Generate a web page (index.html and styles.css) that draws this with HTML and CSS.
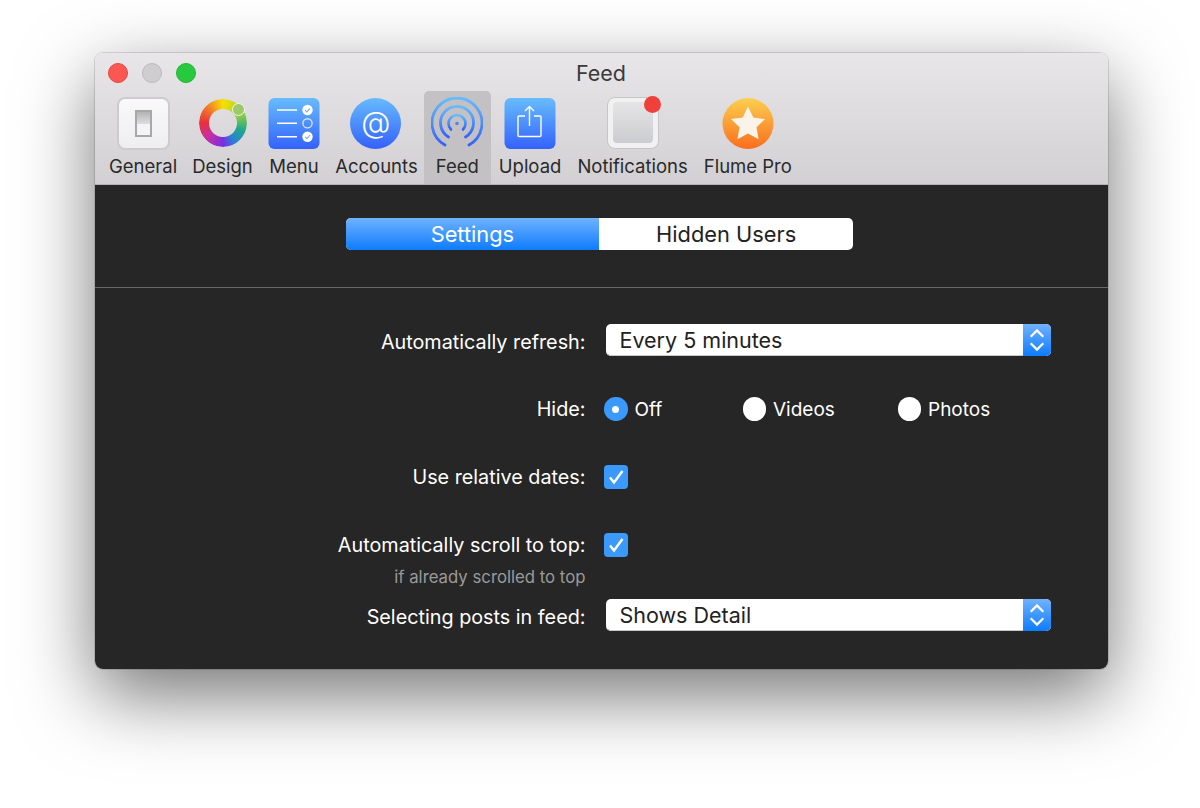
FILE: index.html
```html
<!DOCTYPE html>
<html lang="en">
<head>
    <meta charset="UTF-8">
    <title>Feed</title>
    <link rel="stylesheet" href="styles.css">
</head>
<body>
    <div class="window">
        <div class="titlebar">
            <div class="lights">
                <span class="light red"></span>
                <span class="light gray"></span>
                <span class="light green"></span>
            </div>
            <div class="title">Feed</div>
            <div class="tabs">
                <div class="tab tab-general">
                    <div class="icon">
                        <div class="general-icon"><div class="switch"><div class="switch-top"></div><div class="switch-bottom"></div></div></div>
                    </div>
                    <div class="tab-label">General</div>
                </div>
                <div class="tab tab-design">
                    <div class="icon">
                        <div class="wheel"></div>
                        <div class="wheel-knob"></div>
                    </div>
                    <div class="tab-label">Design</div>
                </div>
                <div class="tab tab-menu">
                    <div class="icon">
                        <svg width="52" height="52" viewBox="0 0 52 52">
                            <defs>
                                <linearGradient id="blue" x1="0" y1="0" x2="0" y2="1">
                                    <stop offset="0" stop-color="#67bcfd"/>
                                    <stop offset="1" stop-color="#3362fb"/>
                                </linearGradient>
                            </defs>
                            <rect x="0.5" y="1" width="51" height="51" rx="6" fill="url(#blue)"/>
                            <g stroke="#fff" stroke-width="1.4">
                                <path d="M9 13h20M9 26.300h20M9 39.700h20"/>
                                <circle cx="39.500" cy="26.300" r="4.600" fill="none" stroke="#d5e4fd"/>
                            </g>
                            <circle cx="39.500" cy="13" r="5.200" fill="#fff"/>
                            <circle cx="39.500" cy="39.700" r="5.200" fill="#fff"/>
                            <path d="M37.100 13.200l1.700 1.700 3.200-3.400M37.100 39.900l1.700 1.700 3.200-3.400" fill="none" stroke="#7fb0f8" stroke-width="1.200"/>
                        </svg>
                    </div>
                    <div class="tab-label">Menu</div>
                </div>
                <div class="tab tab-accounts">
                    <div class="icon">
                        <div class="at-icon">@</div>
                    </div>
                    <div class="tab-label">Accounts</div>
                </div>
                <div class="tab tab-feed active">
                    <div class="icon">
                        <svg width="52" height="52" viewBox="0 0 52 52" fill="none" stroke="url(#blue)" stroke-linecap="round">
                            <path d="M14 48A25 25 0 1 1 38 48" stroke-width="2.800"/>
                            <path d="M17.500 40A16.500 16.500 0 1 1 34.500 40" stroke-width="2.800"/>
                            <path d="M20 32.500A8.500 8.500 0 1 1 32 32.500" stroke-width="2.600"/>
                            <circle cx="26" cy="26.500" r="1.800" fill="#4a86f8" stroke="none"/>
                        </svg>
                    </div>
                    <div class="tab-label">Feed</div>
                </div>
                <div class="tab tab-upload">
                    <div class="icon">
                        <svg width="52" height="52" viewBox="0 0 52 52" fill="none">
                            <rect x="0.5" y="1" width="51" height="51" rx="6" fill="url(#blue)"/>
                            <g stroke="#fff" stroke-width="1.400" stroke-linejoin="round">
                                <path d="M21 19h-6a1 1 0 0 0 -1 1v18.500a1 1 0 0 0 1 1h21a1 1 0 0 0 1 -1v-18.500a1 1 0 0 0 -1 -1h-6"/>
                                <path d="M25.500 29V10M21 14l4.500-4.500 4.500 4.500"/>
                            </g>
                        </svg>
                    </div>
                    <div class="tab-label">Upload</div>
                </div>
                <div class="tab tab-notifications">
                    <div class="icon">
                        <div class="notif-icon"><div class="notif-inner"></div></div>
                        <div class="notif-badge"></div>
                    </div>
                    <div class="tab-label">Notifications</div>
                </div>
                <div class="tab tab-pro">
                    <div class="icon">
                        <svg width="52" height="52" viewBox="0 0 52 52">
                            <defs>
                                <linearGradient id="orange" x1="0" y1="0" x2="0" y2="1">
                                    <stop offset="0" stop-color="#fbd04f"/>
                                    <stop offset="1" stop-color="#fa6d1d"/>
                                </linearGradient>
                            </defs>
                            <circle cx="26" cy="26.500" r="25.500" fill="url(#orange)"/>
                            <path d="M26 9.500l5.300 11 11.700 1.600-8.500 8.200 2.100 12-10.600-5.700-10.600 5.700 2.100-12-8.500-8.200 11.700-1.600z" fill="#f9f3ea"/>
                        </svg>
                    </div>
                    <div class="tab-label">Flume Pro</div>
                </div>
            </div>
        </div>

        <div class="panel">
            <div class="segment-row">
                <div class="segment">
                    <div class="segment-item selected">Settings</div>
                    <div class="segment-item">Hidden Users</div>
                </div>
            </div>

            <div class="form">
                <div class="form-row row-refresh">
                    <div class="form-label select-label">Automatically refresh:</div>
                    <div class="select">
                        <span class="select-value">Every 5 minutes</span>
                        <span class="stepper">
                            <svg width="16" height="24" viewBox="0 0 16 24" fill="none" stroke="#fff" stroke-width="2.200">
                                <path d="M1.700 8.700l6.300-6.300 6.300 6.300M1.700 15.300l6.300 6.300 6.300-6.300"/>
                            </svg>
                        </span>
                    </div>
                </div>

                <div class="form-row row-hide">
                    <div class="form-label">Hide:</div>
                    <div class="radios">
                        <div class="radio-item radio-off"><span class="radio on"></span>Off</div>
                        <div class="radio-item radio-videos"><span class="radio"></span>Videos</div>
                        <div class="radio-item"><span class="radio"></span>Photos</div>
                    </div>
                </div>

                <div class="form-row row-dates">
                    <div class="form-label">Use relative dates:</div>
                    <span class="checkbox">
                        <svg width="24" height="24" viewBox="0 0 24 24" fill="none" stroke="#fff" stroke-width="2.400"><path d="M6 12.500l4 5 8.500-11.500"/></svg>
                    </span>
                </div>

                <div class="form-row row-scroll">
                    <div class="form-label">Automatically scroll to top:</div>
                    <span class="checkbox">
                        <svg width="24" height="24" viewBox="0 0 24 24" fill="none" stroke="#fff" stroke-width="2.400"><path d="M6 12.500l4 5 8.500-11.500"/></svg>
                    </span>
                </div>
                <div class="form-row row-note">
                    <div class="form-label note">if already scrolled to top</div>
                </div>

                <div class="form-row row-select">
                    <div class="form-label select-label">Selecting posts in feed:</div>
                    <div class="select">
                        <span class="select-value">Shows Detail</span>
                        <span class="stepper">
                            <svg width="16" height="24" viewBox="0 0 16 24" fill="none" stroke="#fff" stroke-width="2.200">
                                <path d="M1.700 8.700l6.300-6.300 6.300 6.300M1.700 15.300l6.300 6.300 6.300-6.300"/>
                            </svg>
                        </span>
                    </div>
                </div>
            </div>
        </div>
    </div>
</body>
</html>
```

FILE: styles.css
```css
html, body {
    height: 100%;
}
body {
    margin: 0;
    background: #fff;
    font-family: Inter, "Liberation Sans", sans-serif;
    overflow: hidden;
}
.window {
    width: 1013px;
    height: 616px;
    margin: 53px 0 0 94.5px;
    border-radius: 8px;
    box-shadow: 0 26px 75px rgba(0, 0, 0, 0.55), 0 0 0 1px rgba(0, 0, 0, 0.12);
    display: flex;
    flex-direction: column;
}

/* toolbar */
.titlebar {
    height: 132px;
    box-sizing: border-box;
    background: linear-gradient(#e8e6e8, #d2d0d2);
    border-radius: 8px 8px 0 0;
    border-bottom: 1px solid #b4b2b4;
    position: relative;
}
.lights {
    position: absolute;
    top: 10px;
    left: 13.5px;
    display: flex;
    gap: 14px;
}
.light {
    width: 20px;
    height: 20px;
    border-radius: 50%;
    box-sizing: border-box;
}
.red {
    background: #fc5753;
    border: 1px solid #e5453f;
}
.gray {
    background: #cfcdcf;
    border: 1px solid #bcbabc;
}
.green {
    background: #28c93f;
    border: 1px solid #20b534;
}
.title {
    height: 38px;
    line-height: 41px;
    text-align: center;
    font-size: 21.5px;
    color: #3a3a3a;
}
.tabs {
    display: flex;
    padding-left: 6.5px;
}
.tab {
    height: 93px;
    padding: 6px 8px 0;
    box-sizing: border-box;
    display: flex;
    flex-direction: column;
    align-items: center;
}
.tab.active {
    background: #c3c1c3;
    border-radius: 5px 5px 0 0;
    padding: 6px 12px 0;
}
.tab-design {
    margin-left: -1px;
}
.tab-menu {
    margin-left: 0.5px;
}
.tab-accounts {
    margin-left: 0.5px;
}
.tab-feed {
    margin-left: -2px;
}
.icon {
    width: 52px;
    height: 57px;
    margin: 0 -12px;
    position: relative;
}
.icon svg {
    display: block;
}
.tab-label {
    font-size: 18.5px;
    line-height: 24px;
    color: #2a2a2a;
    white-space: nowrap;
}

.general-icon {
    width: 53px;
    height: 53px;
    box-sizing: border-box;
    border: 2px solid #cdcbcd;
    border-radius: 8px;
    background: linear-gradient(#f9f9fa, #eeeef0);
    display: flex;
    align-items: center;
    justify-content: center;
}
.switch {
    width: 17px;
    height: 27px;
    box-sizing: border-box;
    border: 2px solid #a9a7a9;
    display: flex;
    flex-direction: column;
}
.switch-top {
    height: 12px;
    background: linear-gradient(#b4b3b5, #dededf);
}
.switch-bottom {
    flex: 1;
    background: #f4f4f5;
}

.wheel {
    position: absolute;
    left: 3px;
    top: 2px;
    width: 48px;
    height: 48px;
    border-radius: 50%;
    background: conic-gradient(#f7e000, #9ed23a 60deg, #1fa98a 110deg, #2a7fd8 150deg, #7a2fe0 180deg, #c42fa8 225deg, #e8303c 270deg, #f2792a 315deg, #f7e000);
    -webkit-mask: radial-gradient(circle, transparent 13.5px, #000 14.5px);
    mask: radial-gradient(circle, transparent 13.5px, #000 14.5px);
}
.wheel-knob {
    position: absolute;
    left: 36px;
    top: 6px;
    width: 13px;
    height: 13px;
    box-sizing: border-box;
    border-radius: 50%;
    background: #9bc96b;
    border: 1.5px solid #f4f4f4;
}

.at-icon {
    width: 51px;
    height: 51px;
    margin-top: 1px;
    border-radius: 50%;
    background: linear-gradient(#66bbfd, #3361fb);
    color: #fff;
    font-size: 30px;
    font-weight: 300;
    line-height: 48px;
    text-align: center;
}

.notif-icon {
    width: 52px;
    height: 52px;
    box-sizing: border-box;
    padding: 4px 5px 5px;
    border: 1.5px solid #c6c5c7;
    border-radius: 8px;
    background: #f2f1f2;
}
.notif-inner {
    height: 100%;
    border-radius: 4px;
    background: linear-gradient(#e6e5e6, #cbccd0);
}
.notif-badge {
    position: absolute;
    right: -2px;
    top: -1px;
    width: 17px;
    height: 17px;
    border-radius: 50%;
    background: #f0403c;
}

/* dark panel */
.panel {
    flex: 1;
    background: #262626;
    border-radius: 0 0 8px 8px;
    display: flex;
    flex-direction: column;
}
.segment-row {
    height: 103px;
    box-sizing: border-box;
    padding-top: 33px;
    border-bottom: 1px solid #666;
    display: flex;
    justify-content: center;
}
.segment {
    width: 507.5px;
    height: 32px;
    margin-right: 3.5px;
    display: flex;
    background: #fff;
    border-radius: 5px;
    overflow: hidden;
}
.segment-item {
    flex: 1;
    font-size: 21.8px;
    line-height: 32px;
    text-align: center;
    color: #222;
}
.segment-item.selected {
    background: linear-gradient(#70b2fd, #0d7cfe);
    color: #fff;
}

.form {
    display: flex;
    flex-direction: column;
}
.form-row {
    min-height: 24px;
    display: flex;
    align-items: center;
    gap: 20px;
}
.form-label {
    width: 491px;
    flex-shrink: 0;
    text-align: right;
    font-size: 19.8px;
    line-height: 24px;
    color: #fff;
    white-space: nowrap;
}
.select-label {
    padding-top: 4px;
}
.note {
    font-size: 16.75px;
    line-height: 20px;
    color: #9a9a9a;
}
.row-refresh {
    margin-top: 36px;
}
.row-hide {
    margin-top: 41px;
}
.row-dates {
    margin-top: 44px;
}
.row-scroll {
    margin-top: 44px;
}
.row-note {
    min-height: 20px;
    margin-top: 10px;
}
.row-select {
    margin-top: 12px;
}

.select {
    width: 445px;
    height: 32px;
    background: #fff;
    border-radius: 5px;
    box-shadow: inset 0 -1px 0 #c8c8c8;
    overflow: hidden;
    display: flex;
    justify-content: space-between;
}
.select-value {
    padding-left: 14px;
    font-size: 21.5px;
    line-height: 32px;
    color: #222;
}
.stepper {
    width: 28px;
    background: linear-gradient(#70b2fd, #0d7cfe);
    display: flex;
    align-items: center;
    justify-content: center;
}

.radios {
    display: flex;
    margin-left: -1.5px;
}
.radio-item {
    display: flex;
    align-items: center;
    gap: 7px;
    font-size: 19px;
    color: #fff;
}
.radio-off {
    width: 138.5px;
}
.radio-videos {
    width: 155px;
}
.radio {
    width: 23.5px;
    height: 23.5px;
    box-sizing: border-box;
    border-radius: 50%;
    background: #fff;
    display: flex;
    align-items: center;
    justify-content: center;
}
.radio.on {
    background: #3b99fc;
}
.radio.on::after {
    content: "";
    width: 7px;
    height: 7px;
    border-radius: 50%;
    background: #fff;
}
.checkbox {
    width: 24px;
    height: 24px;
    margin: -1px 0 0 -1.5px;
    border-radius: 4px;
    background: #3b99fc;
}
.checkbox svg {
    display: block;
}
```
